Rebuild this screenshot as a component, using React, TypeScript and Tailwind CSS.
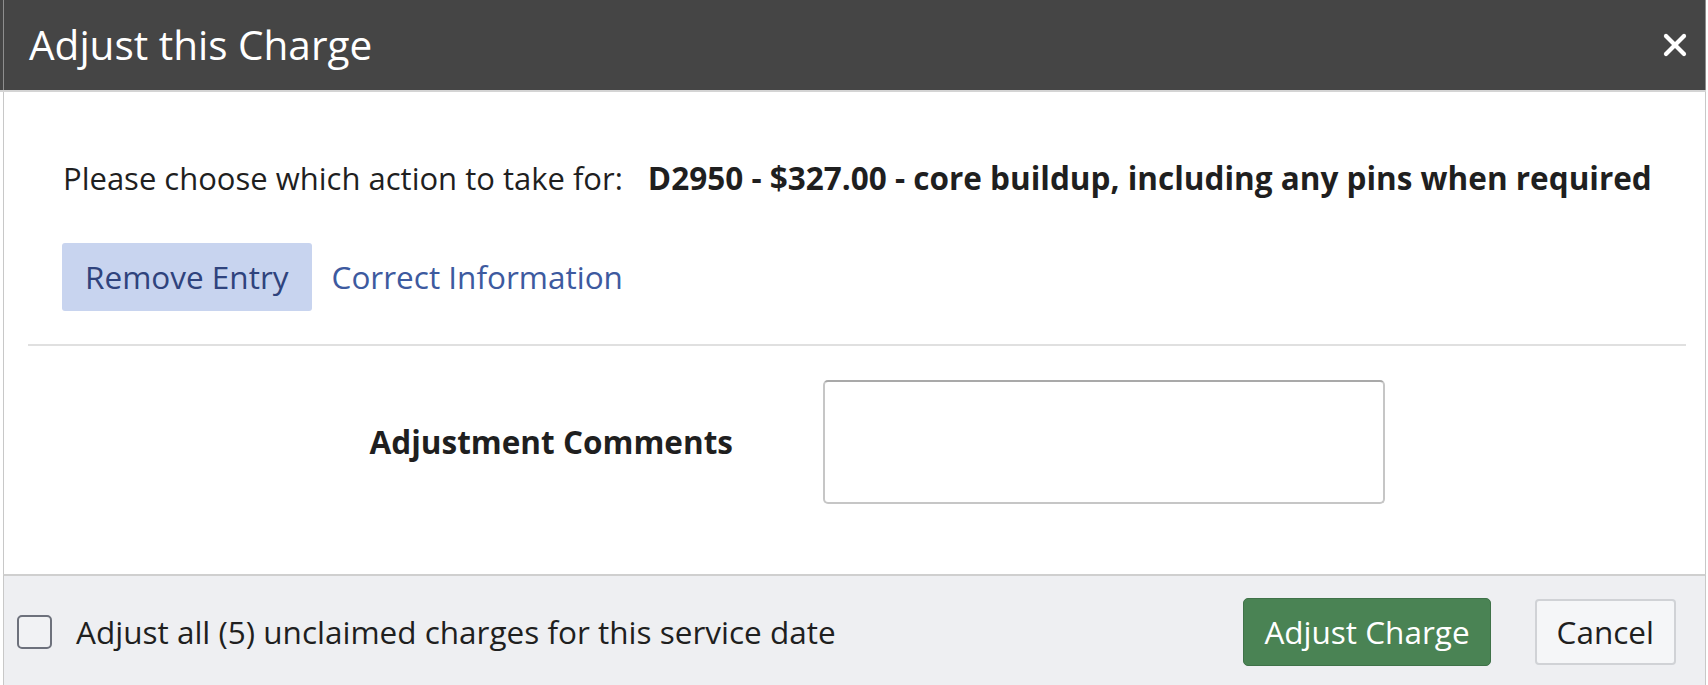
import { useState } from 'react';

const App = () => {
  const [allDates, setAllDates] = useState(false);
  const [tab, setTab] = useState<'remove' | 'correct'>('remove');

  return (
    <div className="w-[1708px] h-[685px] bg-white overflow-hidden flex flex-col font-['Open_Sans','Liberation_Sans',sans-serif] text-[#1f1f1f]">
      {/* header */}
      <div className="w-[1706px] bg-[#454545] border-b-2 border-[#d4d4d4]">
        <div className="ml-[3px] h-[90px] border-x border-[#8e8e8e] flex items-center justify-between pl-[25px] pr-[18px]">
          <h2 className="text-[40.5px] leading-none text-white font-normal">Adjust this Charge</h2>
          <button className="w-[24px] h-[24px] flex items-center justify-center">
            <svg width="24" height="24" viewBox="0 0 24 24" fill="none" stroke="white" strokeWidth="4.2" strokeLinecap="round">
              <line x1="3" y1="3" x2="21" y2="21" />
              <line x1="21" y1="3" x2="3" y2="21" />
            </svg>
          </button>
        </div>
      </div>

      {/* body */}
      <div className="ml-[3px] w-[1703px] h-[482px] border-x border-[#c8c8c8] flex flex-col">
        <p className="pl-[59px] pt-[63px] text-[31px] leading-[46px] whitespace-nowrap">
          Please choose which action to take for:
          <span className="ml-[25px] text-[31.5px] font-bold">D2950 - $327.00 - core buildup, including any pins when required</span>
        </p>

        <div className="pl-[58px] mt-[42px] flex">
          <button
            onClick={() => setTab('remove')}
            className={`px-[23px] py-[11px] text-[31.5px] leading-[46px] rounded-[3px] ${tab === 'remove' ? 'bg-[#c8d4ef] text-[#2f437d]' : 'text-[#3d5a9f]'}`}
          >
            Remove Entry
          </button>
          <button
            onClick={() => setTab('correct')}
            className={`px-[20px] py-[11px] text-[31.5px] leading-[46px] rounded-[3px] ${tab === 'correct' ? 'bg-[#c8d4ef] text-[#2f437d]' : 'text-[#3d5a9f]'}`}
          >
            Correct Information
          </button>
        </div>

        <div className="mt-[33px] ml-[24px] mr-[19px] h-[2px] bg-[#e0e0e0]" />

        <div className="mt-[34px] flex items-center">
          <label className="w-[729px] text-right text-[31.5px] font-bold leading-[46px]">Adjustment Comments</label>
          <textarea className="ml-[90px] w-[562px] h-[124px] rounded-[5px] border-2 border-[#c6c6c6] border-t-[#a9a9a9] resize-none outline-none" />
        </div>
      </div>

      {/* footer */}
      <div className="ml-[3px] w-[1703px] flex-1 border-x border-t-2 border-[#cfcfcf] border-x-[#c8c8c8] bg-[#eeeff2] pt-[22px] pl-[13px] pr-[29px]">
        <div className="flex items-center justify-between">
          <label className="flex items-center cursor-pointer">
            <span
              onClick={() => setAllDates(!allDates)}
              className="w-[35px] h-[34px] rounded-[5px] border-2 border-[#6d717c] bg-[#f1f2f4] flex items-center justify-center"
            >
              {allDates && (
                <svg width="20" height="20" viewBox="0 0 20 20" fill="none" stroke="#333" strokeWidth="3">
                  <path d="M3 10l5 5 9-10" />
                </svg>
              )}
            </span>
            <span className="ml-[24px] text-[31.5px] leading-[46px]">Adjust all (5) unclaimed charges for this service date</span>
          </label>

          <div className="flex items-center">
            <button className="h-[68px] px-[20px] rounded-[5px] bg-[#4a8354] border border-[#3f7249] text-white text-[31.5px] leading-[46px]">
              Adjust Charge
            </button>
            <button className="ml-[44px] h-[66px] px-[20px] rounded-[4px] bg-[#f5f6f8] border-2 border-[#d0d2d6] text-[#1f1f1f] text-[31.5px] leading-[46px]">
              Cancel
            </button>
          </div>
        </div>
      </div>
    </div>
  );
};

export default App;
